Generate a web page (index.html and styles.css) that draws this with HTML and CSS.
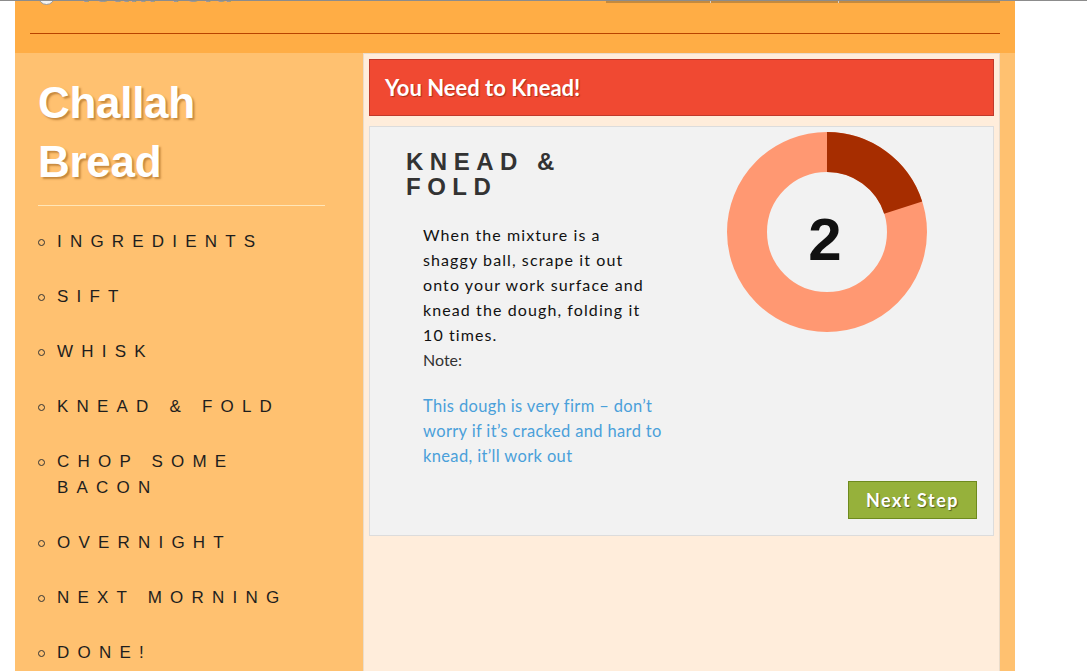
FILE: index.html
```html
<!DOCTYPE html>
<html>
<head>
<meta charset="utf-8">
<title>Challah Bread</title>
<link rel="stylesheet" href="styles.css">
</head>
<body>
<div class="topline"></div>
<div class="page">
  <header class="header">
    <div class="header-inner">
      <div class="brand"><span class="logo"></span><span class="brand-name">Team Tofu</span></div>
      <nav class="tabs"><span class="tab"></span><span class="tab"></span><span class="tab"></span></nav>
    </div>
  </header>
  <div class="body-row">
    <aside class="sidebar">
      <h1 class="recipe-title">Challah Bread</h1>
      <hr class="rule">
      <ul class="steps">
        <li>INGREDIENTS</li>
        <li>SIFT</li>
        <li>WHISK</li>
        <li>KNEAD &amp; FOLD</li>
        <li>CHOP SOME BACON</li>
        <li>OVERNIGHT</li>
        <li>NEXT MORNING</li>
        <li>DONE!</li>
      </ul>
    </aside>
    <main class="main">
      <div class="alert">You Need to Knead!</div>
      <section class="card">
        <div class="card-top">
          <div class="step-text">
            <h2 class="step-title">KNEAD &amp; FOLD</h2>
            <p class="step-desc">When the mixture is a shaggy ball, scrape it out onto your work surface and knead the dough, folding it 10 times.</p>
            <div class="note-label">Note:</div>
            <p class="note">This dough is very firm – don’t worry if it’s cracked and hard to knead, it’ll work out</p>
          </div>
          <div class="donut">
            <svg width="200" height="200" viewBox="0 0 200 200">
              <circle cx="100" cy="100" r="80" fill="none" stroke="#ff9872" stroke-width="40"/>
              <circle cx="100" cy="100" r="80" fill="none" stroke="#a62d00" stroke-width="40" stroke-dasharray="100.53 502.65" transform="rotate(-90 100 100)"/>
              <text x="98" y="128" text-anchor="middle" class="donut-num">2</text>
            </svg>
          </div>
        </div>
        <button class="next-btn">Next Step</button>
      </section>
    </main>
  </div>
</div>
</body>
</html>
```
FILE: styles.css
```css
html, body {
  margin: 0;
  padding: 0;
  background: #ffffff;
  overflow: hidden;
}
body {
  font-family: "Liberation Sans", Arial, sans-serif;
}
.topline {
  position: fixed;
  top: 0;
  left: 0;
  right: 0;
  height: 1px;
  background: #8c8c8c;
  z-index: 5;
}
.page {
  width: 1000px;
  margin-left: 15px;
  background: #ffc170;
  min-height: 700px;
}
.header {
  background: #ffad45;
  height: 53px;
  padding: 0 15px;
  overflow: hidden;
}
.header-inner {
  height: 33px;
  border-bottom: 1px solid #b84300;
  display: flex;
  justify-content: space-between;
  align-items: flex-start;
}
.brand {
  display: flex;
  align-items: flex-end;
  margin-top: -23px;
  height: 30px;
  gap: 22px;
  padding-left: 8px;
}
.logo {
  width: 15px;
  height: 15px;
  border-radius: 50%;
  background: #f2f2f2;
  border: 1px solid #999;
  margin-bottom: 2px;
}
.brand-name {
  font-size: 30px;
  font-weight: bold;
  color: #9a9a9a;
  line-height: 30px;
  letter-spacing: 1px;
}
.tabs {
  display: flex;
  margin-top: 1px;
}
.tab {
  height: 2px;
  background: #c48a3e;
  border-left: 1px solid #d8d0c8;
}
.tab:nth-child(1) { width: 104px; border-left: none; }
.tab:nth-child(2) { width: 127px; }
.tab:nth-child(3) { width: 161px; }
.body-row {
  display: flex;
  align-items: flex-start;
}
.sidebar {
  width: 348px;
  box-sizing: border-box;
  padding: 20px 38px 0 23px;
}
.recipe-title {
  margin: 0;
  font-size: 44px;
  line-height: 59px;
  font-weight: bold;
  color: #ffffff;
  letter-spacing: -0.3px;
  text-shadow: 2px 2px 2px rgba(150, 90, 20, 0.55);
}
.rule {
  margin: 14px 0 0;
  border: 0;
  height: 1px;
  background: #ffe6b8;
}
.steps {
  list-style: none;
  margin: 23px 0 0;
  padding: 0;
}
.steps li {
  position: relative;
  padding-left: 19px;
  font-size: 17px;
  line-height: 26px;
  letter-spacing: 8.2px;
  color: #1e1e1e;
  margin-bottom: 29px;
}
.steps li::before {
  content: "";
  position: absolute;
  left: 0;
  top: 10px;
  width: 5px;
  height: 5px;
  border: 1px solid #333;
  border-radius: 50%;
}
.main {
  width: 637px;
  box-sizing: border-box;
  background: #ffeddb;
  border: 1px solid #eadccb;
  border-bottom: none;
  padding: 5px 5px 0;
  min-height: 640px;
}
.alert {
  background: #f04932;
  border: 1px solid #c0392b;
  height: 57px;
  box-sizing: border-box;
  padding-left: 15px;
  display: flex;
  align-items: center;
  font-family: "Lato", sans-serif;
  font-weight: bold;
  font-size: 22px;
  color: #ffffff;
  text-shadow: 1px 1px 1px rgba(120, 30, 10, 0.6);
}
.card {
  margin-top: 10px;
  height: 410px;
  box-sizing: border-box;
  background: #f2f2f2;
  border: 1px solid #dcdcdc;
  display: flex;
  flex-direction: column;
}
.card-top {
  display: flex;
  justify-content: space-between;
}
.step-text {
  width: 270px;
  padding: 22px 0 0 36px;
  font-family: "Lato", sans-serif;
}
.step-title {
  margin: 0;
  width: 200px;
  font-family: "Liberation Sans", Arial, sans-serif;
  font-weight: bold;
  font-size: 24px;
  line-height: 25px;
  letter-spacing: 6.5px;
  color: #333333;
}
.step-desc {
  margin: 23px 0 0 17px;
  width: 232px;
  font-size: 16px;
  line-height: 25px;
  letter-spacing: 1.1px;
  color: #111111;
}
.note-label {
  margin-left: 17px;
  font-size: 16px;
  line-height: 25px;
  color: #333333;
}
.note {
  margin: 22px 0 0 17px;
  width: 246px;
  font-size: 16.5px;
  line-height: 25px;
  color: #4aa0da;
  letter-spacing: 0.35px;
}
.donut {
  margin: 5px 66px 0 0;
  width: 200px;
  height: 200px;
}
.donut-num {
  font-family: "Liberation Sans", Arial, sans-serif;
  font-weight: bold;
  font-size: 60px;
  fill: #111111;
}
.next-btn {
  margin: auto 16px 16px 0;
  align-self: flex-end;
  width: 129px;
  height: 38px;
  background: #96b13b;
  border: 1px solid #6e8a1e;
  color: #ffffff;
  font-family: "Lato", sans-serif;
  font-weight: bold;
  font-size: 18px;
  letter-spacing: 1.5px;
  text-shadow: 1px 1px 1px rgba(0, 0, 0, 0.45);
  padding: 0;
}
```
